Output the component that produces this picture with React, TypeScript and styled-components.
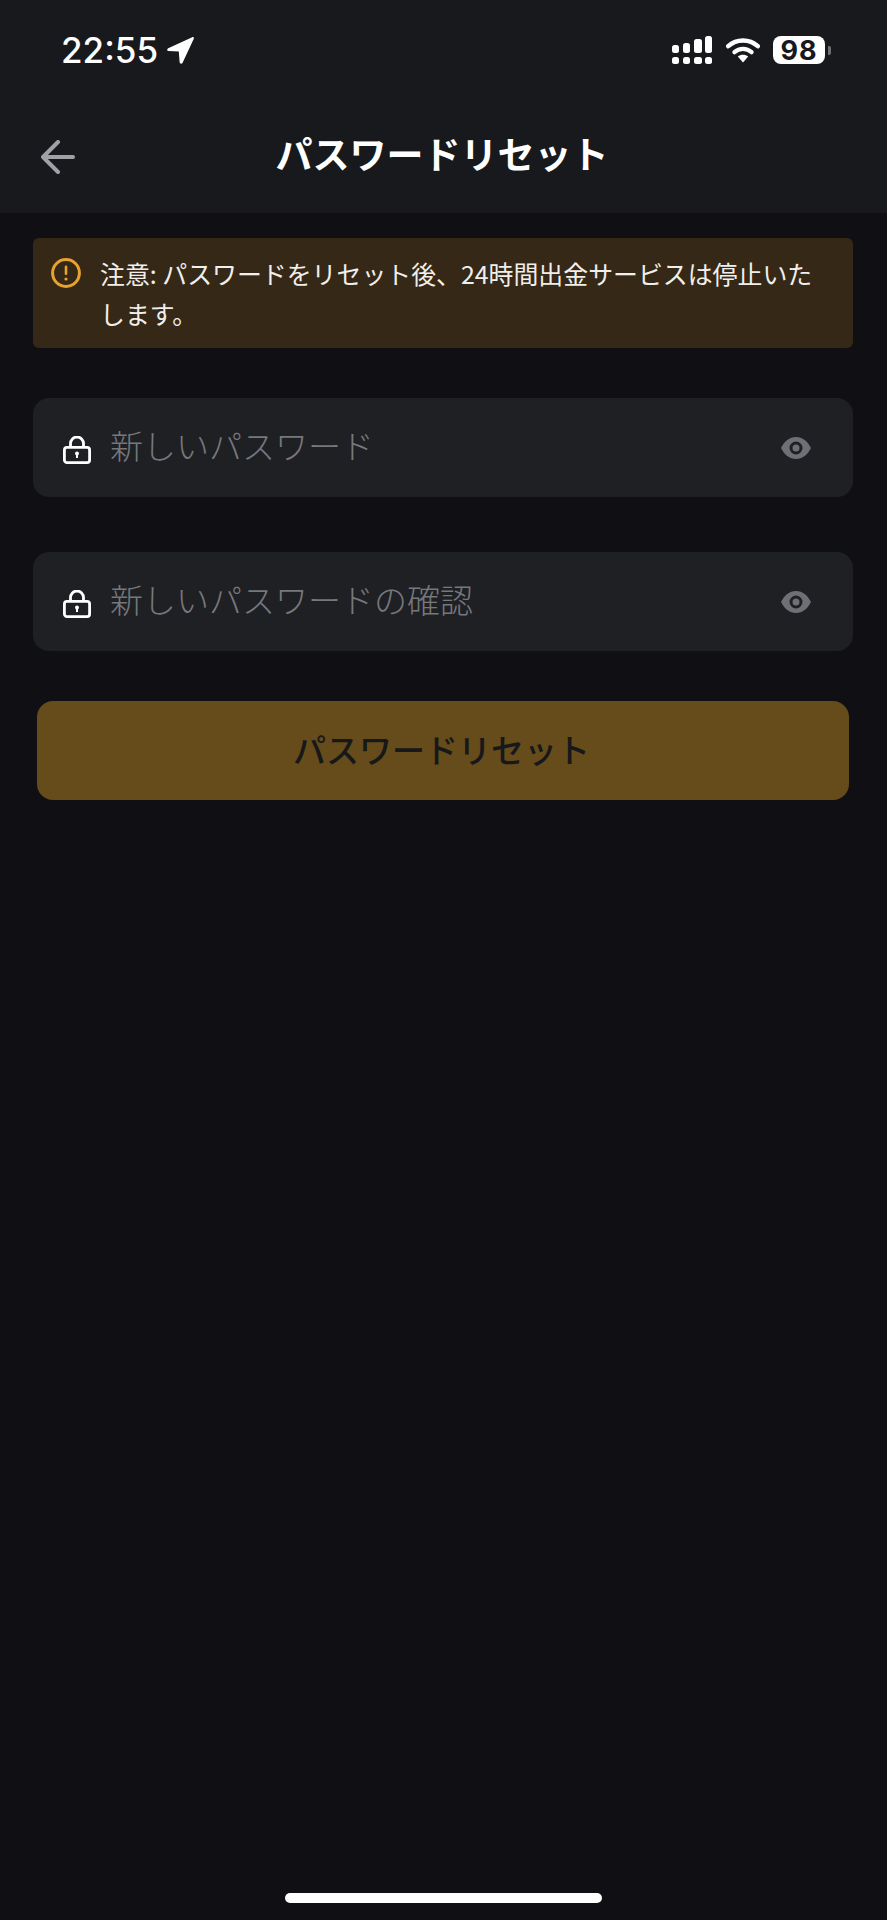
import * as React from 'react';
import styled, { createGlobalStyle } from 'styled-components';

const CJK = `"Noto Sans CJK JP", "Noto Sans", sans-serif`;

const GlobalStyle = createGlobalStyle`
  html, body {
    margin: 0;
    padding: 0;
    background: #101014;
  }
  * {
    box-sizing: border-box;
  }
`;

const Page = styled.div`
  width: 887px;
  height: 1920px;
  display: flex;
  flex-direction: column;
  background: #101014;
  font-family: ${CJK};
  overflow: hidden;
`;

const Header = styled.header`
  height: 213px;
  flex-shrink: 0;
  background: #17191d;
`;

const StatusBar = styled.div`
  height: 100px;
  display: flex;
  align-items: center;
  justify-content: space-between;
  padding: 0 56px 0 61px;
`;

const StatusLeft = styled.div`
  display: flex;
  align-items: center;
  gap: 9px;
`;

const StatusRight = styled.div`
  display: flex;
  align-items: center;
`;

const Time = styled.span`
  font-family: Inter, sans-serif;
  font-size: 35px;
  font-weight: 500;
  line-height: 40px;
  color: #fff;
`;

const Battery = styled.div`
  width: 52px;
  height: 28px;
  margin-left: 13px;
  border-radius: 8px;
  background: #fff;
  display: flex;
  align-items: center;
  justify-content: center;
  font-family: Inter, sans-serif;
  font-size: 27px;
  font-weight: 700;
  letter-spacing: 1px;
  color: #17191d;
`;

const BatteryNub = styled.div`
  width: 3px;
  height: 9px;
  margin-left: 3px;
  border-radius: 0 2px 2px 0;
  background: #6f7074;
`;

const NavBar = styled.div`
  height: 113px;
  position: relative;
  display: flex;
  align-items: center;
  justify-content: center;
  padding-bottom: 8px;
`;

const BackButton = styled.button`
  position: absolute;
  left: 41px;
  top: 40px;
  width: 34px;
  height: 34px;
  padding: 0;
  border: 0;
  background: none;
  display: flex;
`;

const Title = styled.h1`
  margin: 0 0 0 -3px;
  font-size: 37px;
  font-weight: 700;
  line-height: 48px;
  color: #fff;
`;

const Main = styled.main`
  display: flex;
  flex-direction: column;
  padding: 25px 34px 0 33px;
`;

const Notice = styled.div`
  height: 110px;
  display: flex;
  align-items: flex-start;
  gap: 19px;
  padding: 20px 30px 0 18px;
  border-radius: 6px;
  background: #352816;
`;

const NoticeIcon = styled.svg`
  width: 30px;
  height: 30px;
  flex-shrink: 0;
`;

const NoticeText = styled.p`
  margin: -5px 0 0;
  font-size: 24.9px;
  line-height: 40px;
  color: #f0efec;
`;

const Field = styled.label<{ $top: number }>`
  height: 99px;
  margin-top: ${(p) => p.$top}px;
  display: flex;
  align-items: center;
  padding: 0 42px 0 30px;
  border-radius: 16px;
  background: #1f2024;
`;

const FieldIcon = styled.svg`
  width: 28px;
  height: 28px;
  margin-top: 4px;
  flex-shrink: 0;
`;

const FieldInput = styled.input`
  flex: 1;
  min-width: 0;
  margin: 0 0 5px 19px;
  padding: 0;
  border: 0;
  outline: 0;
  background: none;
  font-family: ${CJK};
  font-size: 33px;
  font-weight: 300;
  color: #fff;

  &::placeholder {
    color: #77787c;
    opacity: 1;
  }
`;

const EyeIcon = styled.svg`
  width: 30px;
  height: 22px;
  flex-shrink: 0;
`;

const SubmitButton = styled.button`
  height: 99px;
  margin: 50px 4px 0;
  padding: 0 3px 4px 0;
  border: 0;
  border-radius: 16px;
  background: #664b1b;
  font-family: ${CJK};
  font-size: 33px;
  font-weight: 500;
  color: #17181a;
`;

const HomeIndicator = styled.div`
  width: 317px;
  height: 10px;
  margin: auto auto 17px;
  border-radius: 5px;
  background: #fff;
`;

const SignalIcon = () => (
  <svg width="40" height="28" viewBox="0 0 40 28" fill="#fff">
    <rect x="0" y="9" width="7" height="8" rx="2.500" />
    <rect x="11" y="7" width="7" height="10" rx="2.500" />
    <rect x="22" y="3" width="8" height="14" rx="2.500" />
    <rect x="33" y="0" width="7" height="17" rx="2.500" />
    <rect x="0" y="21" width="7" height="7" rx="2.500" />
    <rect x="11" y="21" width="7" height="7" rx="2.500" />
    <rect x="22" y="21" width="8" height="7" rx="2.500" />
    <rect x="33" y="21" width="7" height="7" rx="2.500" />
  </svg>
);

const WifiIcon = () => (
  <svg width="34" height="26" viewBox="0 0 34 26" fill="none" style={{ marginLeft: 14 }}>
    <path d="M2.2 9.2C10.6 1.6 23.4 1.6 31.8 9.2" stroke="#fff" strokeWidth="4.4" strokeLinecap="round" />
    <path d="M8.4 15.2C13.4 10.8 20.6 10.8 25.6 15.2" stroke="#fff" strokeWidth="4.2" strokeLinecap="round" />
    <path d="M11.8 19.6C14.8 17.2 19.2 17.2 22.2 19.6L17 25.6Z" fill="#fff" />
  </svg>
);

const LocationIcon = () => (
  <svg width="27" height="27" viewBox="0 0 27 27" fill="#fff">
    <path d="M25.2.2 1.2 11.2c-1.6.8-1.2 2.8.6 2.9l10 .5.8 10.5c.2 1.8 2.2 2.2 3 .6L26.8 1.8c.4-1.1-.5-2-1.6-1.6Z" />
  </svg>
);

const LockGlyph = () => (
  <FieldIcon viewBox="0 0 28 28" fill="none">
    <path d="M7.500 12V7.500a6.500 6.500 0 0 1 13 0V12" stroke="#fff" strokeWidth="2.800" />
    <rect x="1.400" y="11.400" width="25.200" height="15.200" rx="2.600" stroke="#fff" strokeWidth="2.800" />
    <circle cx="14" cy="17.400" r="2" fill="#fff" />
    <rect x="13" y="17.500" width="2" height="4.500" fill="#fff" />
  </FieldIcon>
);

const EyeGlyph = () => (
  <EyeIcon viewBox="0 0 30 22">
    <path
      fillRule="evenodd"
      fill="#6e7075"
      d="M15 0C8.600 0 3.200 4.400 0 11c3.200 6.600 8.600 11 15 11s11.800-4.400 15-11C26.800 4.400 21.400 0 15 0Zm0 4.500a6.500 6.500 0 1 1 0 13 6.500 6.500 0 0 1 0-13Zm0 3a3.500 3.500 0 1 0 0 7 3.500 3.500 0 0 0 0-7Z"
    />
  </EyeIcon>
);

const App = () => {
  return (
    <Page>
      <GlobalStyle />
      <Header>
        <StatusBar>
          <StatusLeft>
            <Time>22:55</Time>
            <LocationIcon />
          </StatusLeft>
          <StatusRight>
            <SignalIcon />
            <WifiIcon />
            <Battery>98</Battery>
            <BatteryNub />
          </StatusRight>
        </StatusBar>
        <NavBar>
          <BackButton aria-label="戻る">
            <svg width="34" height="34" viewBox="0 0 34 34" fill="none">
              <path
                d="M32 17H3M17 2 2 17l15 15"
                stroke="#a0a1a6"
                strokeWidth="4"
                strokeLinecap="round"
                strokeLinejoin="round"
              />
            </svg>
          </BackButton>
          <Title>パスワードリセット</Title>
        </NavBar>
      </Header>
      <Main>
        <Notice>
          <NoticeIcon viewBox="0 0 30 30" fill="none">
            <circle cx="15" cy="15" r="13.400" stroke="#e8a22f" strokeWidth="3" />
            <rect x="13.700" y="7.500" width="2.600" height="9.500" rx="1.300" fill="#e8a22f" />
            <circle cx="15" cy="21" r="1.600" fill="#e8a22f" />
          </NoticeIcon>
          <NoticeText>注意: パスワードをリセット後、24時間出金サービスは停止いたします。</NoticeText>
        </Notice>
        <Field $top={50}>
          <LockGlyph />
          <FieldInput type="password" placeholder="新しいパスワード" />
          <EyeGlyph />
        </Field>
        <Field $top={55}>
          <LockGlyph />
          <FieldInput type="password" placeholder="新しいパスワードの確認" />
          <EyeGlyph />
        </Field>
        <SubmitButton>パスワードリセット</SubmitButton>
      </Main>
      <HomeIndicator />
    </Page>
  );
};

export default App;
